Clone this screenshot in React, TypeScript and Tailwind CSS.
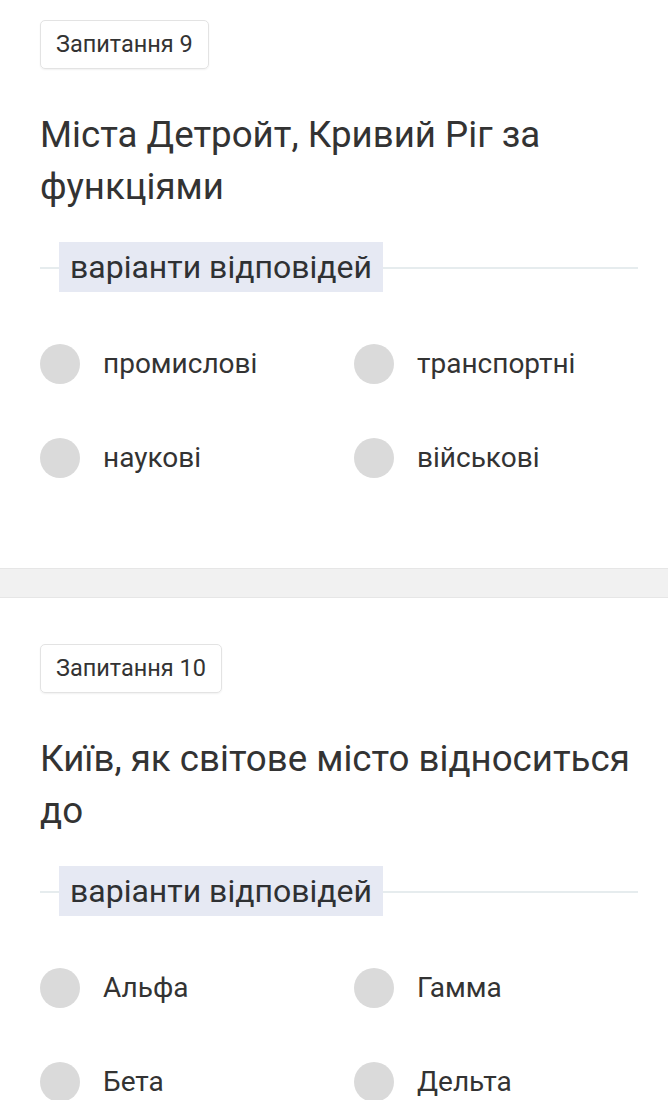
import React from "react";

type Q = { badge: string; title: string[]; options: string[] };

const questions: Q[] = [
  {
    badge: "Запитання 9",
    title: ["Міста Детройт, Кривий Ріг за", "функціями"],
    options: ["промислові", "транспортні", "наукові", "військові"],
  },
  {
    badge: "Запитання 10",
    title: ["Київ, як світове місто відноситься", "до"],
    options: ["Альфа", "Гамма", "Бета", "Дельта"],
  },
];

function Question({ q, first }: { q: Q; first: boolean }) {
  return (
    <div className={first ? "pt-[20px] pb-[90px] pl-[40px]" : "pt-[46px] pb-[90px] pl-[40px]"}>
      <div className="inline-flex h-[49px] items-center rounded-[5px] border border-[#e3e3e3] px-[15px] text-[23.5px] text-[#333333] shadow-[0_1px_2px_rgba(0,0,0,0.06)]">
        {q.badge}
      </div>
      <div className="mt-[40px] pr-[20px] text-[36.7px] leading-[52px] text-[#333333]">
        {q.title.map((l, i) => (
          <div key={i} className="whitespace-nowrap">{l}</div>
        ))}
      </div>
      <div className="relative mt-[29px] mr-[30px] flex h-[50px] items-center">
        <div className="absolute left-0 right-0 top-[25px] h-[2px] bg-[#e6ecee]" />
        <div className="relative ml-[19px] flex h-[50px] items-center bg-[#e6e9f3] px-[11px] text-[32px] text-[#2f3133]">
          варіанти відповідей
        </div>
      </div>
      <div className="mt-[52px] grid grid-cols-[314px_314px] gap-y-[54px]">
        {q.options.map((o) => (
          <div key={o} className="flex h-[40px] items-center">
            <div className="h-[40px] w-[40px] shrink-0 rounded-full bg-[#dadada]" />
            <div className="ml-[23px] text-[28px] text-[#333333]">{o}</div>
          </div>
        ))}
      </div>
    </div>
  );
}

export default function App() {
  return (
    <div className="h-[1100px] w-[668px] overflow-hidden bg-white" style={{ fontFamily: "Roboto, 'Noto Sans', sans-serif" }}>
      <Question q={questions[0]} first />
      <div className="h-[30px] border-y border-[#e6e6e6] bg-[#f1f1f1]" />
      <Question q={questions[1]} first={false} />
    </div>
  );
}
